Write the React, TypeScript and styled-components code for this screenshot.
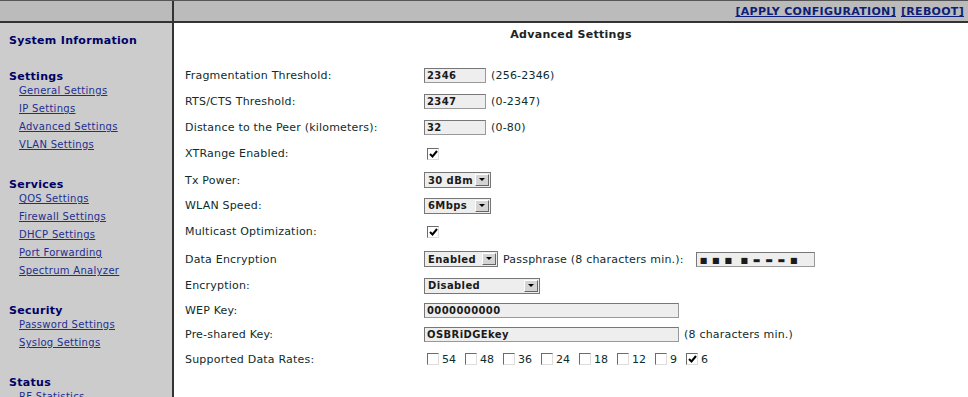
import * as React from 'react';
import styled, { createGlobalStyle } from 'styled-components';

const GlobalStyle = createGlobalStyle`
    html, body {
        margin: 0;
        padding: 0;
        background: #ffffff;
    }
    body {
        font-family: 'DejaVu Sans', Verdana, sans-serif;
    }
`;

const Page = styled.div`
    display: grid;
    grid-template-columns: 174px 1fr;
    grid-template-rows: 22px 1fr;
    height: 396px;
    overflow: hidden;
    border-top: 1px solid #555;
`;

const TopLeft = styled.div`
    background: #bbbbbb;
    border-right: 2px solid #333;
    border-bottom: 2px solid #333;
`;

const TopBar = styled.div`
    display: flex;
    justify-content: flex-end;
    align-items: center;
    gap: 5px;
    padding: 1px 4px 0 0;
    background: #bbbbbb;
    border-bottom: 2px solid #333;
`;

const HeaderLink = styled.a`
    font-size: 11px;
    font-weight: 700;
    color: #0d1f7a;
    text-decoration: underline;
    letter-spacing: 0.3px;
`;

const Sidebar = styled.nav`
    display: flex;
    flex-direction: column;
    padding: 11px 0 0 9px;
    background: #cccccc;
    border-right: 2px solid #333;
`;

const Group = styled.div`
    display: flex;
    flex-direction: column;
    margin-bottom: 22px;
`;

const GroupTitle = styled.span`
    height: 14px;
    font-size: 11px;
    font-weight: 700;
    line-height: 14px;
    color: #000066;
    letter-spacing: 0.3px;
`;

const NavLink = styled.a`
    height: 18px;
    padding-left: 10px;
    font-size: 10px;
    line-height: 14px;
    color: #1d2f8f;
    text-decoration: underline;
    letter-spacing: 0.3px;
`;

const Main = styled.main`
    display: flex;
    flex-direction: column;
    padding: 4px 0 0 11px;
    color: #0d2d2d;
    font-size: 11px;
`;

const Title = styled.h1`
    margin: 0 0 20px -11px;
    height: 15px;
    text-align: center;
    font-size: 11px;
    font-weight: 700;
    line-height: 15px;
    color: #222;
    letter-spacing: 0.3px;
`;

const Row = styled.div<{ $h: number }>`
    display: grid;
    grid-template-columns: 239px 1fr;
    align-items: center;
    height: ${(p) => p.$h}px;
`;

const Label = styled.span`
    font-size: 11px;
    letter-spacing: 0.2px;
`;

const Field = styled.div`
    display: flex;
    align-items: center;
    gap: 5px;
`;

const Hint = styled.span<{ $gap?: number }>`
    margin-right: ${(p) => p.$gap ?? 0}px;
    font-size: 11px;
    letter-spacing: 0.2px;
`;

const TextBox = styled.div<{ $w: number }>`
    box-sizing: border-box;
    width: ${(p) => p.$w}px;
    height: 15px;
    padding-left: 2px;
    background: #eeeeee;
    border: 1px solid #777;
    border-right-color: #999;
    border-bottom-color: #999;
    font-size: 10px;
    font-weight: 700;
    line-height: 13px;
    color: #1a1a1a;
    letter-spacing: 0.4px;
    white-space: nowrap;
    overflow: hidden;
`;

const Dots = styled.span`
    font-size: 8px;
    letter-spacing: 1px;
    margin-left: 1px;
`;

const SelectBox = styled.div<{ $w: number }>`
    box-sizing: border-box;
    display: flex;
    align-items: center;
    justify-content: space-between;
    width: ${(p) => p.$w}px;
    height: 16px;
    padding: 0 1px 0 3px;
    background: #eeeeee;
    border: 1px solid #777;
    font-size: 10px;
    font-weight: 700;
    color: #1a1a1a;
    letter-spacing: 0.4px;
`;

const Arrow = styled.span`
    box-sizing: border-box;
    display: flex;
    align-items: center;
    justify-content: center;
    width: 14px;
    height: 12px;
    background: #d4d4d4;
    border: 1px solid;
    border-color: #fff #666 #666 #fff;
`;

const CheckBox = styled.span`
    box-sizing: border-box;
    display: inline-flex;
    align-items: center;
    justify-content: center;
    width: 12px;
    height: 12px;
    margin-left: 3px;
    background: #fff;
    border: 1px solid;
    border-color: #6b6b6b #ddd #ddd #6b6b6b;
`;

const Rates = styled.div`
    display: flex;
    align-items: center;
`;

const Rate = styled.span`
    display: inline-flex;
    align-items: center;
    gap: 3px;
    margin-right: 6px;
    font-size: 11px;
`;

const Check = ({ on }: { on?: boolean }) => (
    <CheckBox>
        {on && (
            <svg width="9" height="8" viewBox="0 0 9 8">
                <path d="M1 4 L3.5 6.5 L8 1" stroke="#000" strokeWidth="2" fill="none" />
            </svg>
        )}
    </CheckBox>
);

const Select = ({ value, w }: { value: string; w: number }) => (
    <SelectBox $w={w}>
        <span>{value}</span>
        <Arrow>
            <svg width="6" height="4" viewBox="0 0 6 4">
                <path d="M0 0 H6 L3 3 Z" fill="#000" />
            </svg>
        </Arrow>
    </SelectBox>
);

const nav = [
    { title: 'System Information', links: [] as string[] },
    { title: 'Settings', links: ['General Settings', 'IP Settings', 'Advanced Settings', 'VLAN Settings'] },
    {
        title: 'Services',
        links: ['QOS Settings', 'Firewall Settings', 'DHCP Settings', 'Port Forwarding', 'Spectrum Analyzer'],
    },
    { title: 'Security', links: ['Password Settings', 'Syslog Settings'] },
    { title: 'Status', links: ['RF Statistics'] },
];

const rates = ['54', '48', '36', '24', '18', '12', '9', '6'];

export default function App() {
    return (
        <>
            <GlobalStyle />
            <Page>
                <TopLeft />
                <TopBar>
                    <HeaderLink>[APPLY CONFIGURATION]</HeaderLink>
                    <HeaderLink>[REBOOT]</HeaderLink>
                </TopBar>
                <Sidebar>
                    {nav.map((g) => (
                        <Group key={g.title}>
                            <GroupTitle>{g.title}</GroupTitle>
                            {g.links.map((l) => (
                                <NavLink key={l}>{l}</NavLink>
                            ))}
                        </Group>
                    ))}
                </Sidebar>
                <Main>
                    <Title>Advanced Settings</Title>
                    <Row $h={26}>
                        <Label>Fragmentation Threshold:</Label>
                        <Field>
                            <TextBox $w={62}>2346</TextBox>
                            <Hint>(256-2346)</Hint>
                        </Field>
                    </Row>
                    <Row $h={26}>
                        <Label>RTS/CTS Threshold:</Label>
                        <Field>
                            <TextBox $w={62}>2347</TextBox>
                            <Hint>(0-2347)</Hint>
                        </Field>
                    </Row>
                    <Row $h={26}>
                        <Label>Distance to the Peer (kilometers):</Label>
                        <Field>
                            <TextBox $w={62}>32</TextBox>
                            <Hint>(0-80)</Hint>
                        </Field>
                    </Row>
                    <Row $h={27}>
                        <Label>XTRange Enabled:</Label>
                        <Field>
                            <Check on />
                        </Field>
                    </Row>
                    <Row $h={26}>
                        <Label>Tx Power:</Label>
                        <Field>
                            <Select value="30 dBm" w={67} />
                        </Field>
                    </Row>
                    <Row $h={25}>
                        <Label>WLAN Speed:</Label>
                        <Field>
                            <Select value="6Mbps" w={67} />
                        </Field>
                    </Row>
                    <Row $h={27}>
                        <Label>Multicast Optimization:</Label>
                        <Field>
                            <Check on />
                        </Field>
                    </Row>
                    <Row $h={28}>
                        <Label>Data Encryption</Label>
                        <Field>
                            <Select value="Enabled" w={74} />
                            <Hint $gap={7}>Passphrase (8 characters min.):</Hint>
                            <TextBox $w={119}>
                                <Dots>■ ■ ■ &nbsp;■ ▬ ▬ ▬ ■</Dots>
                            </TextBox>
                        </Field>
                    </Row>
                    <Row $h={25}>
                        <Label>Encryption:</Label>
                        <Field>
                            <Select value="Disabled" w={116} />
                        </Field>
                    </Row>
                    <Row $h={24}>
                        <Label>WEP Key:</Label>
                        <Field>
                            <TextBox $w={255}>0000000000</TextBox>
                        </Field>
                    </Row>
                    <Row $h={24}>
                        <Label>Pre-shared Key:</Label>
                        <Field>
                            <TextBox $w={255}>OSBRiDGEkey</TextBox>
                            <Hint>(8 characters min.)</Hint>
                        </Field>
                    </Row>
                    <Row $h={26}>
                        <Label>Supported Data Rates:</Label>
                        <Rates>
                            {rates.map((r) => (
                                <Rate key={r}>
                                    <Check on={r === '6'} />
                                    {r}
                                </Rate>
                            ))}
                        </Rates>
                    </Row>
                </Main>
            </Page>
        </>
    );
}
